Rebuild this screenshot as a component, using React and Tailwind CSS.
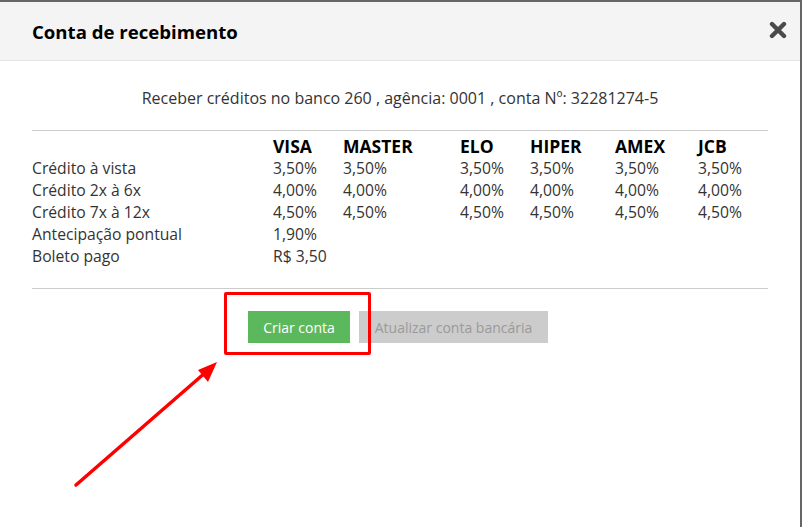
const rates = [
  { label: "Crédito à vista", values: ["3,50%", "3,50%", "3,50%", "3,50%", "3,50%", "3,50%"] },
  { label: "Crédito 2x à 6x", values: ["4,00%", "4,00%", "4,00%", "4,00%", "4,00%", "4,00%"] },
  { label: "Crédito 7x à 12x", values: ["4,50%", "4,50%", "4,50%", "4,50%", "4,50%", "4,50%"] },
  { label: "Antecipação pontual", values: ["1,90%"] },
  { label: "Boleto pago", values: ["R$ 3,50"] },
];

const brands = ["VISA", "MASTER", "ELO", "HIPER", "AMEX", "JCB"];

const cols = "grid grid-cols-[241px_70px_117px_70px_85px_83px_1fr]";

export default function App() {
  return (
    <div
      className="relative w-[802px] h-[527px] bg-white border-t-2 border-r-2 border-[#666] overflow-hidden text-[#333]"
      style={{ fontFamily: '"Open Sans", "Noto Sans", sans-serif' }}
    >
      {/* header */}
      <div className="h-[59px] bg-[#f4f4f4] border-b border-[#e5e5e5] flex items-center justify-between pl-8 pr-3">
        <h3 className="text-[18.6px] font-bold text-black mb-[-1px]">Conta de recebimento</h3>
        <svg width="18" height="18" viewBox="0 0 18 18" className="mr-[1px] mb-[3px]">
          <path d="M3 3 L15 15 M15 3 L3 15" stroke="#4a4a4a" strokeWidth="4.4" strokeLinecap="round" />
        </svg>
      </div>

      <div className="px-8">
        <p className="text-center text-[16px] mt-[26px] leading-[22px]">
          Receber créditos no banco 260 , agência: 0001 , conta Nº: 32281274-5
        </p>

        <div className="mt-[21px] border-t border-[#ccc] pt-[4px] pb-[21px] text-[15.7px] leading-[22px]">
          <div className={cols}>
            <div />
            {brands.map((b) => (
              <div key={b} className="font-bold text-[17.5px] text-black">{b}</div>
            ))}
          </div>
          {rates.map((r) => (
            <div key={r.label} className={cols}>
              <div>{r.label}</div>
              {brands.map((b, i) => (
                <div key={b}>{r.values[i] || ""}</div>
              ))}
            </div>
          ))}
        </div>

        <div className="border-t border-[#ccc] flex justify-center gap-[9px] pt-[22px] pr-[4px]">
          <button className="h-[32px] w-[102px] bg-[#5cb85c] text-white text-[14px]">Criar conta</button>
          <button className="h-[32px] w-[189px] bg-[#cccccc] text-[#9a9a9a] text-[14px] cursor-not-allowed">
            Atualizar conta bancária
          </button>
        </div>
      </div>

      {/* annotation */}
      <div className="absolute left-[224px] top-[290px] w-[147px] h-[63px] border-[3px] border-[#ff0000] rounded-[2px]" />
      <svg className="absolute left-0 top-0" width="802" height="527" viewBox="0 0 802 527">
        <line x1="76" y1="483" x2="206" y2="370" stroke="#ff0000" strokeWidth="3.5" strokeLinecap="round" />
        <polygon points="217,360 198,368 208,380" fill="#ff0000" />
      </svg>
    </div>
  );
}
